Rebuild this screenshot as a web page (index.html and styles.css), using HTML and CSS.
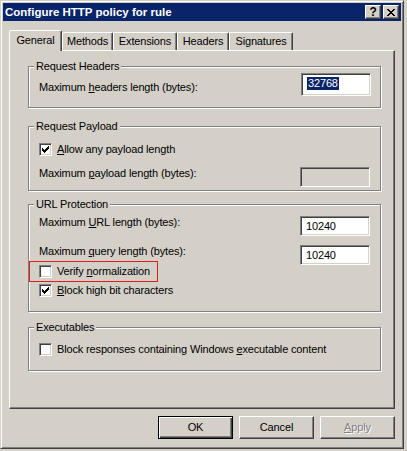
FILE: index.html
```html
<!DOCTYPE html>
<html lang="en">
<head>
    <meta charset="UTF-8">
    <title>Configure HTTP policy for rule</title>
    <link rel="stylesheet" href="styles.css">
</head>
<body>

<div class="window">
    <div class="titlebar">
        <span class="title">Configure HTTP policy for rule</span>
        <div class="caption-btns">
            <span class="cap-btn help">?</span>
            <span class="cap-btn close">
                <svg width="8" height="7" viewBox="0 0 8 7" shape-rendering="crispEdges"><path d="M0 0h2v1h-2z M6 0h2v1h-2z M1 1h2v1h-2z M5 1h2v1h-2z M2 2h4v1h-4z M3 3h2v1h-2z M2 4h4v1h-4z M1 5h2v1h-2z M5 5h2v1h-2z M0 6h2v1h-2z M6 6h2v1h-2z" fill="#000"/></svg>
            </span>
        </div>
    </div>

    <div class="tabs">
        <div class="tab active tab-general">General</div>
        <div class="tab tab-methods">Methods</div>
        <div class="tab tab-extensions">Extensions</div>
        <div class="tab tab-headers">Headers</div>
        <div class="tab tab-signatures">Signatures</div>
    </div>

    <div class="panel">
        <fieldset class="group group-headers">
            <legend>Request Headers</legend>
            <div class="field">
                <span class="label label-low">Maximum <u>h</u>eaders length (bytes):</span>
                <div class="edit edit-tall"><span class="selected">32768</span></div>
            </div>
        </fieldset>

        <fieldset class="group group-payload">
            <legend>Request Payload</legend>
            <div class="check-row">
                <span class="checkbox checked">
                    <svg width="7" height="7" viewBox="0 0 7 7" shape-rendering="crispEdges"><path d="M0 2V5H1V6H2V7H3V6H4V5H5V4H6V3H7V0H6V1H5V2H4V3H3V4H2V3H1V2Z" fill="#000"/></svg>
                </span>
                <span><u>A</u>llow any payload length</span>
            </div>
            <div class="field field-gap">
                <span class="label">Maximum <u>p</u>ayload length (bytes):</span>
                <div class="edit disabled"></div>
            </div>
        </fieldset>

        <fieldset class="group group-url">
            <legend>URL Protection</legend>
            <div class="field field-first">
                <span class="label">Maximum <u>U</u>RL length (bytes):</span>
                <div class="edit">10240</div>
            </div>
            <div class="field field-gap">
                <span class="label">Maximum <u>q</u>uery length (bytes):</span>
                <div class="edit">10240</div>
            </div>
            <div class="check-row marked">
                <span class="checkbox"></span>
                <span>Verify <u>n</u>ormalization</span>
            </div>
            <div class="check-row compact">
                <span class="checkbox checked">
                    <svg width="7" height="7" viewBox="0 0 7 7" shape-rendering="crispEdges"><path d="M0 2V5H1V6H2V7H3V6H4V5H5V4H6V3H7V0H6V1H5V2H4V3H3V4H2V3H1V2Z" fill="#000"/></svg>
                </span>
                <span><u>B</u>lock high bit characters</span>
            </div>
        </fieldset>

        <fieldset class="group group-exec">
            <legend>Executables</legend>
            <div class="check-row">
                <span class="checkbox"></span>
                <span>Block responses containing Windows <u>e</u>xecutable content</span>
            </div>
        </fieldset>
    </div>

    <div class="buttons">
        <span class="btn default">OK</span>
        <span class="btn">Cancel</span>
        <span class="btn disabled"><u>A</u>pply</span>
    </div>
</div>

</body>
</html>
```

FILE: styles.css
```css
html {
    background: #d4d0c8;
}
body {
    margin: 0;
    font-family: 'Liberation Sans', Arial, sans-serif;
    font-size: 11px;
    line-height: 13px;
    letter-spacing: -0.15px;
    color: #000;
}
.window {
    box-sizing: border-box;
    width: 404px;
    height: 449px;
    padding: 1px;
    background: #d4d0c8;
    border: 1px solid;
    border-color: #d4d0c8 #404040 #404040 #d4d0c8;
    box-shadow: inset 1px 1px 0 #fff, inset -1px -1px 0 #808080;
}
.titlebar {
    display: flex;
    justify-content: space-between;
    align-items: center;
    height: 18px;
    margin: 1px;
    padding: 0 2px 0 2px;
    background: #0a246a;
}
.title {
    color: #fff;
    font-weight: bold;
    font-size: 11.5px;
    letter-spacing: 0;
}
.caption-btns {
    display: flex;
    gap: 2px;
}
.cap-btn {
    box-sizing: border-box;
    display: flex;
    justify-content: center;
    align-items: center;
    width: 16px;
    height: 14px;
    background: #d4d0c8;
    border: 1px solid;
    border-color: #fff #404040 #404040 #fff;
    box-shadow: inset -1px -1px 0 #808080;
}
.help {
    font-weight: bold;
    font-size: 12px;
    line-height: 12px;
}

/* tabs */
.tabs {
    display: flex;
    align-items: flex-end;
    height: 20px;
    margin: 9px 0 0 7px;
}
.tab {
    box-sizing: border-box;
    height: 18px;
    padding-top: 2px;
    text-align: center;
    border-top: 1px solid #fff;
    border-left: 1px solid #fff;
    border-right: 1px solid #404040;
    border-radius: 2px 2px 0 0;
    box-shadow: inset -1px 0 0 #808080;
}
.tab.active {
    position: relative;
    z-index: 1;
    height: 21px;
    margin-bottom: -1px;
    padding-top: 3px;
    background: #d4d0c8;
}
.tab-general { width: 53px; }
.tab-methods { width: 51px; }
.tab-extensions { width: 64px; }
.tab-headers { width: 52px; }
.tab-signatures { width: 64px; }

.panel {
    box-sizing: border-box;
    width: 386px;
    height: 359px;
    margin-left: 7px;
    padding: 9px 0 0 18px;
    border: 1px solid;
    border-color: #fff #404040 #404040 #fff;
    box-shadow: inset -1px -1px 0 #808080;
}

/* group boxes */
.group {
    box-sizing: border-box;
    width: 353px;
    min-width: 0;
    margin: 0;
    padding: 0 10px 11px 10px;
    border: 1px solid #808080;
    box-shadow: inset 1px 1px 0 #fff, 1px 1px 0 #fff;
}
.group legend {
    margin-left: -5px;
    padding: 0 2px;
    background: #d4d0c8;
    line-height: 13px;
}
.group-payload {
    margin-top: 12px;
    padding-bottom: 3px;
}
.group-url {
    margin-top: 7px;
    padding-bottom: 12px;
}
.group-exec {
    margin-top: 9px;
}

.field {
    display: flex;
    justify-content: space-between;
    align-items: flex-start;
}
.field-first {
    margin-top: 5px;
}
.field-gap {
    margin-top: 8px;
}
.group-url .field-gap {
    margin-top: 9px;
}
.label-low {
    margin-top: 8px;
}

.edit {
    box-sizing: border-box;
    width: 70px;
    height: 20px;
    padding: 3px 0 0 5px;
    background: #fff;
    border: 1px solid;
    border-color: #808080 #fff #fff #808080;
    box-shadow: inset 1px 1px 0 #404040, inset -1px -1px 0 #d4d0c8;
}
.edit-tall {
    height: 23px;
    margin-right: -1px;
    padding-top: 3px;
}
.edit.disabled {
    background: #d4d0c8;
}
.selected {
    display: inline-block;
    padding: 0 1px;
    background: #0a246a;
    color: #fff;
}

/* check boxes */
.check-row {
    display: flex;
    align-items: center;
    height: 19px;
    margin-top: 7px;
}
.group-exec .check-row {
    margin-top: 6px;
}
.check-row.compact {
    height: 17px;
    margin-top: 0;
}
.check-row.marked {
    box-sizing: border-box;
    width: 129px;
    height: 21px;
    margin: -4px 0 0 -10px;
    padding-left: 9px;
    border: 1px solid #e31b1b;
}
.checkbox {
    box-sizing: border-box;
    display: flex;
    justify-content: center;
    align-items: center;
    flex: none;
    width: 13px;
    height: 13px;
    margin-right: 5px;
    background: #fff;
    border: 1px solid;
    border-color: #808080 #fff #fff #808080;
    box-shadow: inset 1px 1px 0 #404040, inset -1px -1px 0 #d4d0c8;
}

/* dialog buttons */
.buttons {
    display: flex;
    justify-content: flex-end;
    gap: 6px;
    margin: 7px 7px 0 0;
}
.btn {
    box-sizing: border-box;
    display: flex;
    justify-content: center;
    align-items: center;
    width: 75px;
    height: 23px;
    border: 1px solid;
    border-color: #fff #404040 #404040 #fff;
    box-shadow: inset -1px -1px 0 #808080;
}
.btn.default {
    border-color: #000;
    box-shadow: inset 1px 1px 0 #fff, inset -1px -1px 0 #404040, inset -2px -2px 0 #808080;
}
.btn.disabled {
    color: #808080;
    text-shadow: 1px 1px 0 #fff;
}
```
